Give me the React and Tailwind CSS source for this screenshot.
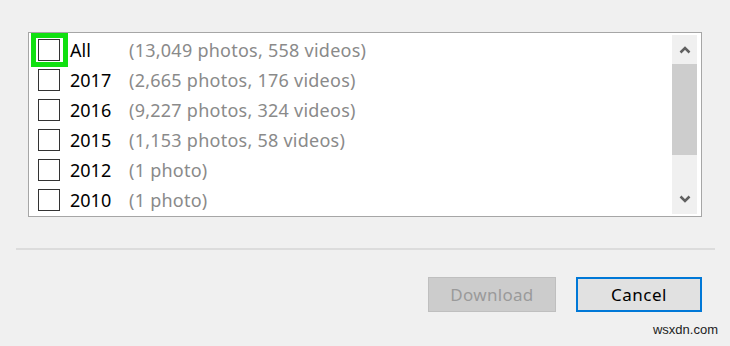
import React from "react";

const rows = [
  { y: "All", c: "(13,049 photos, 558 videos)", hl: true },
  { y: "2017", c: "(2,665 photos, 176 videos)" },
  { y: "2016", c: "(9,227 photos, 324 videos)" },
  { y: "2015", c: "(1,153 photos, 58 videos)" },
  { y: "2012", c: "(1 photo)" },
  { y: "2010", c: "(1 photo)" },
];

export default function App() {
  return (
    <div
      className="w-[730px] h-[346px] bg-[#f0f0f0] flex flex-col overflow-hidden"
      style={{ fontFamily: '"Noto Sans", "Open Sans", sans-serif' }}
    >
      <div className="pt-[32px] pl-[28px]">
        <div className="w-[674px] h-[185px] border border-[#a6a6a6] bg-white flex">
          <div className="flex-1 flex flex-col pt-[2px]">
            {rows.map((r) => (
              <div key={r.y} className="h-[30px] flex items-center pl-[9px]">
                <div className="relative w-[22px] h-[22px] flex items-center justify-center">
                  {r.hl && (
                    <div className="absolute left-[-7px] top-[-6px] w-[37px] h-[34px] border-[5px] border-[#10e010]" />
                  )}
                  <div className="relative w-[22px] h-[22px] border-[1.5px] border-[#333333] bg-white" />
                </div>
                <div className="w-[69px] pl-[10px] text-[18px] leading-none text-black -mt-[1px]">{r.y}</div>
                <div className="text-[18px] leading-none text-[#8a8a8a] tracking-[0.25px] -mt-[1px]">{r.c}</div>
              </div>
            ))}
          </div>
          <div className="w-[25px] my-[2px] mr-[4px] bg-[#f0f0f0] flex flex-col">
            <div className="h-[29px] flex items-center justify-center">
              <svg width="12" height="8" viewBox="0 0 12 8">
                <path d="M1.5 6.5 L6 2 L10.5 6.5" stroke="#606060" strokeWidth="2.5" fill="none" />
              </svg>
            </div>
            <div className="h-[91px] bg-[#cdcdcd]" />
            <div className="flex-1" />
            <div className="h-[30px] flex items-center justify-center">
              <svg width="12" height="8" viewBox="0 0 12 8">
                <path d="M1.5 1.5 L6 6 L10.5 1.5" stroke="#606060" strokeWidth="2.5" fill="none" />
              </svg>
            </div>
          </div>
        </div>
      </div>
      <div className="mt-[31px] ml-[16px] w-[699px] h-[2px] bg-[#dcdcdc]" />
      <div className="flex justify-end gap-[20px] pr-[28px] mt-[27px]">
        <div className="w-[128px] h-[35px] bg-[#cccccc] border border-[#bfbfbf] flex items-center justify-center text-[17px] tracking-[0.3px] text-[#9a9a9a]">
          Download
        </div>
        <div className="w-[126px] h-[35px] bg-[#e1e1e1] border-2 border-[#0078d7] flex items-center justify-center text-[17px] tracking-[0.5px] text-black">
          Cancel
        </div>
      </div>
      <div className="flex justify-end pr-[12px] mt-[11px] text-[13px] leading-none text-[#222]" style={{ fontFamily: '"Liberation Sans", Arial, sans-serif' }}>
        wsxdn.com
      </div>
    </div>
  );
}
